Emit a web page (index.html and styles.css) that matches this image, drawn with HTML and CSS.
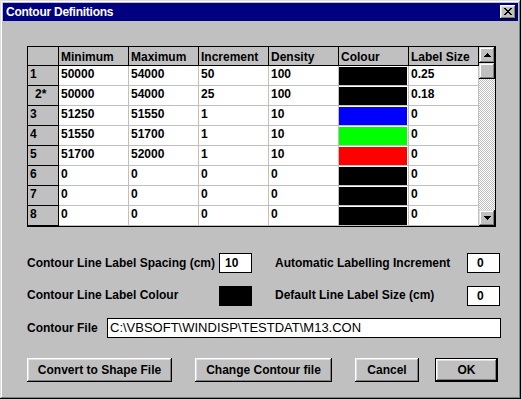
FILE: index.html
```html
<!DOCTYPE html>
<html>
	<head>
		<meta charset="UTF-8">
		<title>Contour Definitions</title>
		<link rel="stylesheet" href="styles.css">
	</head>
	<body>
		<div class="window">
			<div class="title-bar">
				<span class="title">Contour Definitions</span>
				<button class="close-btn">
					<svg width="8" height="7" viewBox="0 0 8 7"><path d="M0 0h2v1H0zM6 0h2v1H6zM1 1h2v1H1zM5 1h2v1H5zM2 2h4v1H2zM3 3h2v1H3zM2 4h4v1H2zM1 5h2v1H1zM5 5h2v1H5zM0 6h2v1H0zM6 6h2v1H6z"/></svg>
				</button>
			</div>

			<div class="dialog">
				<div class="grid">
					<div class="grid-table">
						<div class="cell fixed"></div>
						<div class="cell fixed head">Minimum</div>
						<div class="cell fixed head">Maximum</div>
						<div class="cell fixed head">Increment</div>
						<div class="cell fixed head">Density</div>
						<div class="cell fixed head">Colour</div>
						<div class="cell fixed head">Label Size</div>

						<div class="cell fixed">1</div>
						<div class="cell">50000</div>
						<div class="cell">54000</div>
						<div class="cell">50</div>
						<div class="cell">100</div>
						<div class="cell colour"><div class="swatch black"></div></div>
						<div class="cell">0.25</div>

						<div class="cell fixed current">2*</div>
						<div class="cell">50000</div>
						<div class="cell">54000</div>
						<div class="cell">25</div>
						<div class="cell">100</div>
						<div class="cell colour"><div class="swatch black"></div></div>
						<div class="cell">0.18</div>

						<div class="cell fixed">3</div>
						<div class="cell">51250</div>
						<div class="cell">51550</div>
						<div class="cell">1</div>
						<div class="cell">10</div>
						<div class="cell colour"><div class="swatch blue"></div></div>
						<div class="cell">0</div>

						<div class="cell fixed">4</div>
						<div class="cell">51550</div>
						<div class="cell">51700</div>
						<div class="cell">1</div>
						<div class="cell">10</div>
						<div class="cell colour"><div class="swatch green"></div></div>
						<div class="cell">0</div>

						<div class="cell fixed">5</div>
						<div class="cell">51700</div>
						<div class="cell">52000</div>
						<div class="cell">1</div>
						<div class="cell">10</div>
						<div class="cell colour"><div class="swatch red"></div></div>
						<div class="cell">0</div>

						<div class="cell fixed">6</div>
						<div class="cell">0</div>
						<div class="cell">0</div>
						<div class="cell">0</div>
						<div class="cell">0</div>
						<div class="cell colour"><div class="swatch black"></div></div>
						<div class="cell">0</div>

						<div class="cell fixed">7</div>
						<div class="cell">0</div>
						<div class="cell">0</div>
						<div class="cell">0</div>
						<div class="cell">0</div>
						<div class="cell colour"><div class="swatch black"></div></div>
						<div class="cell">0</div>

						<div class="cell fixed">8</div>
						<div class="cell">0</div>
						<div class="cell">0</div>
						<div class="cell">0</div>
						<div class="cell">0</div>
						<div class="cell colour"><div class="swatch black"></div></div>
						<div class="cell">0</div>
					</div>
					<div class="scrollbar">
						<div class="sb-btn">
							<svg width="7" height="4" viewBox="0 0 7 4"><path d="M3 0h1v1H3zM2 1h3v1H2zM1 2h5v1H1zM0 3h7v1H0z"/></svg>
						</div>
						<div class="sb-btn"></div>
						<div class="sb-track"></div>
						<div class="sb-btn">
							<svg width="7" height="4" viewBox="0 0 7 4"><path d="M0 0h7v1H0zM1 1h5v1H1zM2 2h3v1H2zM3 3h1v1H3z"/></svg>
						</div>
					</div>
				</div>

				<div class="field-row">
					<div class="field">
						<span class="label">Contour Line Label Spacing (cm)</span>
						<span class="input spacing">10</span>
					</div>
					<div class="field">
						<span class="label">Automatic Labelling Increment</span>
						<span class="input small">0</span>
					</div>
				</div>
				<div class="field-row second">
					<div class="field">
						<span class="label">Contour Line Label Colour</span>
						<span class="label-colour"></span>
					</div>
					<div class="field">
						<span class="label">Default Line Label Size (cm)</span>
						<span class="input small">0</span>
					</div>
				</div>
				<div class="field-row file-row">
					<span class="file-label">Contour File</span>
					<span class="input path">C:\VBSOFT\WINDISP\TESTDAT\M13.CON</span>
				</div>

				<div class="buttons">
					<button class="btn convert">Convert to Shape File</button>
					<button class="btn change">Change Contour file</button>
					<button class="btn cancel">Cancel</button>
					<button class="btn ok">OK</button>
				</div>
			</div>
		</div>
	</body>
</html>
```

FILE: styles.css
```css
body {
	margin: 0;
	background: #c0c0c0;
}

.window {
	width: 521px;
	height: 399px;
	box-sizing: border-box;
	padding: 3px;
	background: #c0c0c0;
	box-shadow: inset -1px -1px #000, inset 1px 1px #dfdfdf, inset -2px -2px #808080, inset 2px 2px #fff;
	font-family: "Liberation Sans", Arial, sans-serif;
	font-size: 12px;
	font-weight: bold;
	color: #000;
}

.title-bar {
	height: 18px;
	background: #000080;
	color: #fff;
	display: flex;
	align-items: center;
	justify-content: space-between;
	padding: 0 2px 0 3px;
}
.title {
	letter-spacing: -0.25px;
}
.close-btn {
	width: 16px;
	height: 14px;
	padding: 0 0 1px 0;
	border: none;
	background: #c0c0c0;
	box-shadow: inset -1px -1px #000, inset 1px 1px #fff, inset -2px -2px #808080, inset 2px 2px #dfdfdf;
	display: flex;
	align-items: center;
	justify-content: center;
}

.dialog {
	padding: 25px 0 0 24px;
}

/* grid (flexgrid look) */
.grid {
	display: flex;
	width: 467px;
	height: 179px;
	border: 1px solid #000;
}
.grid-table {
	display: grid;
	grid-template-columns: 31px repeat(6, 70px);
	grid-template-rows: 19px repeat(8, 20px);
	background: #fff;
}
.cell {
	box-sizing: border-box;
	border-right: 1px solid #c0c0c0;
	border-bottom: 1px solid #c0c0c0;
	padding: 1px 0 0 2px;
	line-height: 14px;
	white-space: nowrap;
	overflow: hidden;
}
.fixed {
	background: #c0c0c0;
	border-color: #000;
}
.head {
	padding-top: 3px;
}
.current {
	padding-left: 7px;
}
.colour {
	padding: 1px 1px 0 0;
}
.swatch {
	height: 100%;
}
.black { background: #000; }
.blue { background: #0000ff; }
.green { background: #00ff00; }
.red { background: #ff0000; }

.scrollbar {
	width: 16px;
	display: flex;
	flex-direction: column;
}
.sb-btn {
	height: 16px;
	background: #c0c0c0;
	box-shadow: inset -1px -1px #000, inset 1px 1px #dfdfdf, inset -2px -2px #808080, inset 2px 2px #fff;
	display: flex;
	align-items: center;
	justify-content: center;
}
.sb-track {
	flex: 1;
	background: repeating-conic-gradient(#fff 0 25%, #c0c0c0 0 50%) 0 0 / 2px 2px;
}

/* fields below the grid */
.field-row {
	display: flex;
	align-items: center;
	height: 20px;
	margin-top: 26px;
}
.field-row.second {
	margin-top: 13px;
	align-items: flex-start;
}
.field-row.second .label {
	padding-top: 2px;
}
.field-row.file-row {
	margin-top: 12px;
}
.field {
	display: flex;
	align-items: center;
	margin-right: 23px;
}
.field-row.second .field {
	align-items: flex-start;
}
.label {
	width: 192px;
	line-height: 14px;
}
.input {
	box-sizing: border-box;
	height: 20px;
	border: 1px solid #000;
	background: #fff;
	line-height: 18px;
}
.spacing {
	width: 33px;
	padding-left: 5px;
}
.small {
	width: 33px;
	padding-left: 9px;
}
.label-colour {
	width: 33px;
	height: 20px;
	background: #000;
}
.file-label {
	width: 80px;
}
.path {
	width: 394px;
	padding-left: 2px;
	font-weight: normal;
	font-size: 13px;
}

.buttons {
	display: flex;
	margin-top: 20px;
}
.btn {
	height: 24px;
	padding: 0;
	border: none;
	background: #c0c0c0;
	font: inherit;
	color: #000;
	box-shadow: inset -1px -1px #000, inset 1px 1px #fff, inset -2px -2px #808080, inset 2px 2px #dfdfdf;
}
.convert { width: 145px; margin-right: 23px; }
.change { width: 137px; margin-right: 23px; }
.cancel { width: 64px; margin-right: 16px; }
.ok {
	width: 63px;
	box-shadow: inset 0 0 0 1px #000, inset -2px -2px #000, inset 2px 2px #fff, inset -3px -3px #808080, inset 3px 3px #dfdfdf;
}
```
